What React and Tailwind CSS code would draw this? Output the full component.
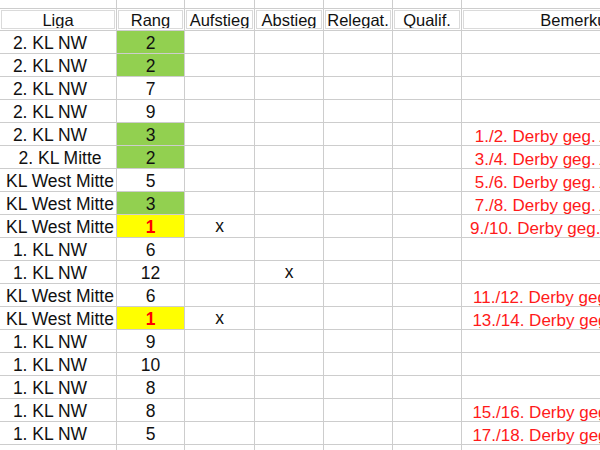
import React from 'react'

const rows = [
  { liga: '2. KL NW', rang: '2', fill: 'green' },
  { liga: '2. KL NW', rang: '2', fill: 'green' },
  { liga: '2. KL NW', rang: '7' },
  { liga: '2. KL NW', rang: '9' },
  { liga: '2. KL NW', rang: '3', fill: 'green', note: '1./2. Derby geg. Aufsteiger 1' },
  { liga: '2. KL Mitte', rang: '2', fill: 'green', note: '3./4. Derby geg. Aufsteiger 1' },
  { liga: 'KL West Mitte', rang: '5', note: '5./6. Derby geg. Aufsteiger 1' },
  { liga: 'KL West Mitte', rang: '3', fill: 'green', note: '7./8. Derby geg. Aufsteiger 1' },
  { liga: 'KL West Mitte', rang: '1', fill: 'yellow', auf: 'x', note: '9./10. Derby geg. Aufsteiger 1' },
  { liga: '1. KL NW', rang: '6' },
  { liga: '1. KL NW', rang: '12', ab: 'x' },
  { liga: 'KL West Mitte', rang: '6', note: '11./12. Derby geg. Aufsteiger' },
  { liga: 'KL West Mitte', rang: '1', fill: 'yellow', auf: 'x', note: '13./14. Derby geg. Aufsteiger' },
  { liga: '1. KL NW', rang: '9' },
  { liga: '1. KL NW', rang: '10' },
  { liga: '1. KL NW', rang: '8' },
  { liga: '1. KL NW', rang: '8', note: '15./16. Derby geg. Aufsteiger' },
  { liga: '1. KL NW', rang: '5', note: '17./18. Derby geg. Aufsteiger' },
]

const cols = 'grid grid-cols-[117px_68px_70px_69px_69px_69px_242px]'
const cell = 'border-r border-b border-[#cdcdcd] flex items-center justify-center whitespace-nowrap overflow-hidden'

function HeaderCell({ children }) {
  return (
    <div className="border-r border-b border-[#cdcdcd] p-px h-[22px]">
      <div className="h-full border border-[#dadada] flex items-center justify-center pt-[2px] whitespace-nowrap overflow-hidden text-[16.5px]">
        {children}
      </div>
    </div>
  )
}

export default function App() {
  return (
    <div
      className="w-[600px] h-[450px] overflow-hidden bg-white text-[#111] text-[17.5px] leading-none"
      style={{ fontFamily: '"Liberation Sans", Arial, sans-serif' }}
    >
      <div className="w-[720px]">
        <div className={cols}>
          {[0, 1, 2, 3, 4, 5, 6].map(i => (
            <div key={i} className="h-[9px] border-r border-b border-[#cdcdcd]" />
          ))}
        </div>

        <div className={cols}>
          <HeaderCell>Liga</HeaderCell>
          <HeaderCell>Rang</HeaderCell>
          <HeaderCell>Aufstieg</HeaderCell>
          <HeaderCell>Abstieg</HeaderCell>
          <HeaderCell>Relegat.</HeaderCell>
          <HeaderCell>Qualif.</HeaderCell>
          <HeaderCell>Bemerkung</HeaderCell>
        </div>

        {rows.map((row, i) => {
          const nw = row.liga.endsWith('NW')
          let rangBg = ''
          if (row.fill === 'green') rangBg = 'bg-[#92d050]'
          if (row.fill === 'yellow') rangBg = 'bg-[#ffff00]'
          return (
            <div key={i} className={cols}>
              <div className={`${cell} h-[23px] pt-[4px] ${nw ? 'pr-[16px]' : 'pl-[4px]'}`}>{row.liga}</div>
              <div className={`${cell} h-[23px] pt-[4px] ${rangBg} ${row.fill === 'yellow' ? 'text-[#ff0000] font-bold' : ''}`}>
                {row.rang}
              </div>
              <div className={`${cell} h-[23px] pt-[2px]`}>{row.auf}</div>
              <div className={`${cell} h-[23px] pt-[2px]`}>{row.ab}</div>
              <div className={`${cell} h-[23px]`} />
              <div className={`${cell} h-[23px]`} />
              <div className={`${cell} h-[23px] pt-[4px] text-[17px] text-[#ff1a1a]`}>{row.note}</div>
            </div>
          )
        })}

        <div className={cols}>
          {[0, 1, 2, 3, 4, 5, 6].map(i => (
            <div key={i} className="h-[23px] border-r border-b border-[#cdcdcd]" />
          ))}
        </div>
      </div>
    </div>
  )
}
